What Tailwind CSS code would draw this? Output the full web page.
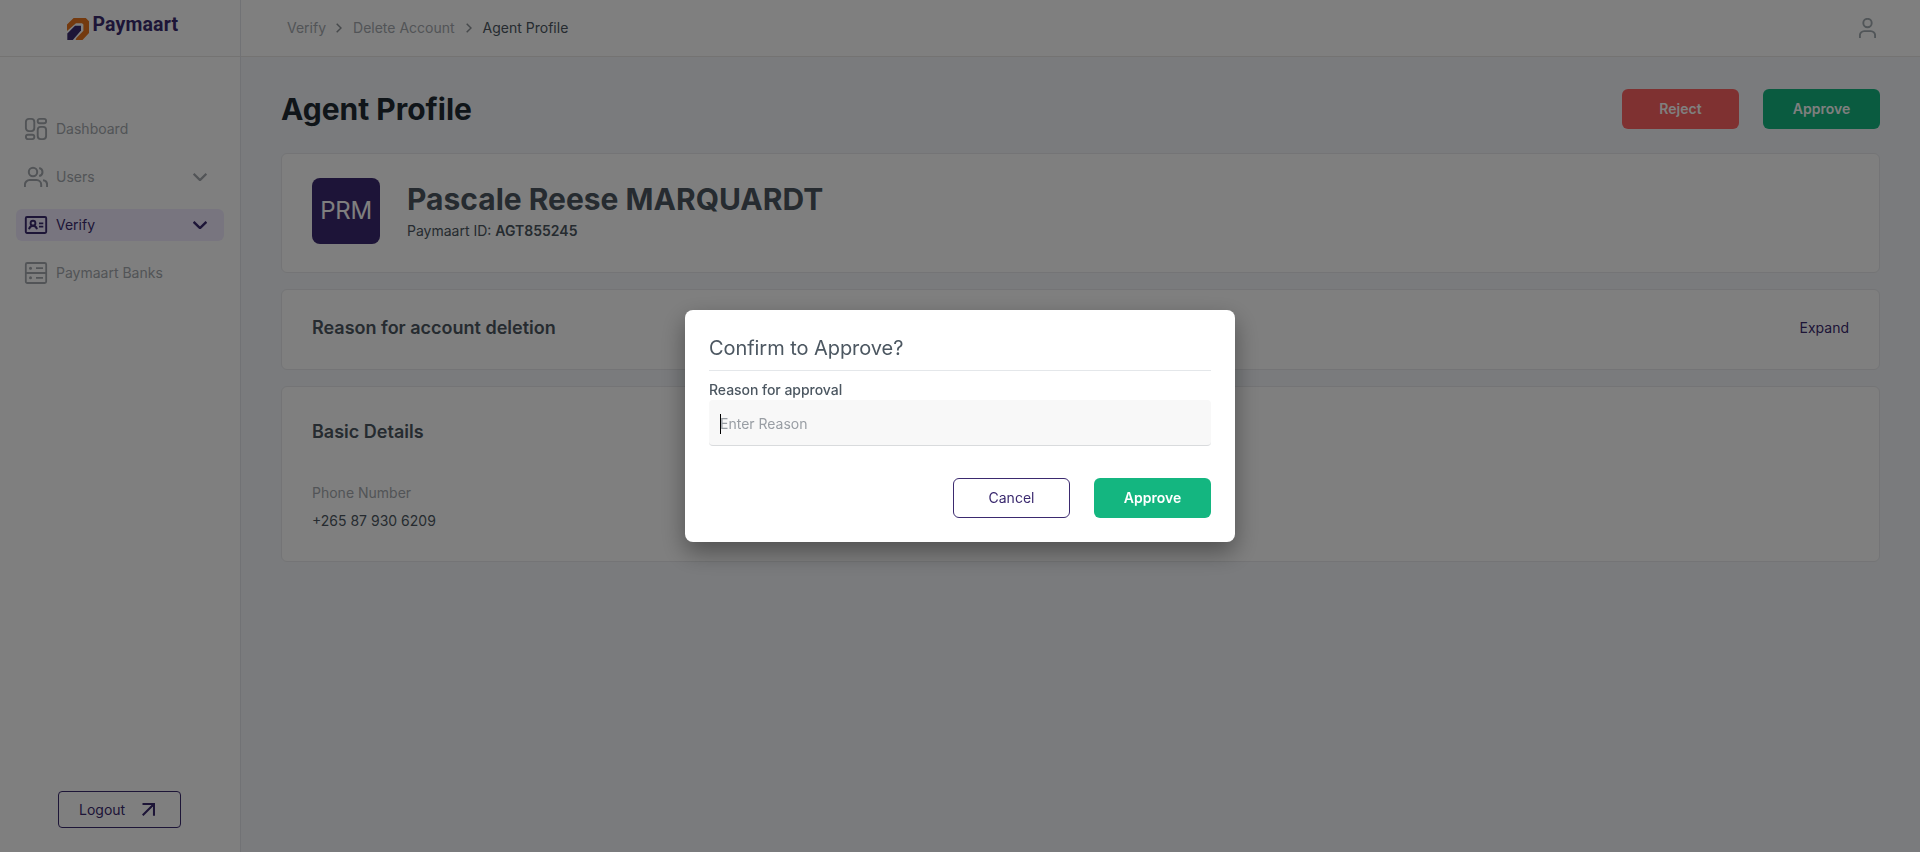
<!DOCTYPE html>
<html lang="en">
<head>
<meta charset="utf-8">
<title>Paymaart - Agent Profile</title>
<script src="https://cdn.jsdelivr.net/npm/@tailwindcss/browser@4"></script>
</head>
<body class="h-screen overflow-hidden bg-[#f4f7fb] font-['Inter',sans-serif] text-sm text-[#4c5761]">
<div class="flex h-screen">
  <!-- Sidebar -->
  <aside class="flex w-[241px] shrink-0 flex-col border-r border-[#e2e5ea] bg-white">
    <div class="flex h-[57px] shrink-0 items-start border-b border-[#e9e7e5] pt-[18px] pl-[67px]">
      <svg class="h-[22px] w-[112px] overflow-visible" viewBox="0 0 112 22">
        <path d="M0 6.6 6.6 0H18.8L22 3.2V15L15.5 22H8.6L9.4 20 16.4 12.8V6.6L15 5.2H9L0 13Z" fill="#e8751f"/>
        <path d="M.3 15.4 8 7.8H14V12.6L5.8 22H.3Z" fill="#3b2a6f"/>
        <text x="25.5" y="13" textLength="85.5" lengthAdjust="spacing" fill="#3b2a6f" class="font-['Roboto',sans-serif] text-[19.5px] font-bold">Paymaart</text>
      </svg>
    </div>
    <nav class="mt-14 flex flex-col gap-4 px-4 text-[#a4a9ae]">
      <a class="flex h-8 items-center gap-2 rounded-md pl-2">
        <svg class="size-6" viewBox="0 0 24 24" fill="none" stroke="currentColor" stroke-width="1.9"><rect x="1.9" y="1.9" width="8.4" height="12.2" rx="3"/><rect x="13.7" y="1.9" width="8.4" height="4.4" rx="2"/><rect x="13.7" y="9.9" width="8.4" height="12.2" rx="3"/><rect x="1.9" y="17.7" width="8.4" height="4.4" rx="2"/></svg>
        <span>Dashboard</span>
      </a>
      <a class="flex h-8 items-center gap-2 rounded-md pr-[17px] pl-2">
        <svg class="size-6" viewBox="0 0 24 24" fill="none" stroke="currentColor" stroke-width="2"><circle cx="9" cy="7" r="4.2"/><path d="M15.2 2.9a4.2 4.2 0 0 1 0 8.2M.9 22v-2.2a4.7 4.7 0 0 1 4.7-4.7h6.9a4.7 4.7 0 0 1 4.7 4.7V22M19 15.2a4.6 4.6 0 0 1 4.1 4.6V22"/></svg>
        <span class="grow">Users</span>
        <svg class="h-2 w-3.5" viewBox="0 0 14 8" fill="none" stroke="currentColor" stroke-width="2.3"><path d="M.6.8 7 7.1 13.4.8"/></svg>
      </a>
      <a class="flex h-8 items-center gap-2 rounded-md bg-[#f0ebff] pr-[17px] pl-2 text-[#3b2a6f]">
        <svg class="size-6" viewBox="0 0 24 24" fill="none" stroke="currentColor" stroke-width="1.9"><rect x="1.8" y="4" width="20.4" height="16" rx="1.2"/><circle cx="9" cy="10.2" r="2.4"/><path d="M5 16.2c.6-2.2 2-3.4 4-3.4s3.4 1.2 4 3.4M15 10.4h4.3M15 13.6h4.3"/></svg>
        <span class="grow">Verify</span>
        <svg class="h-2 w-3.5" viewBox="0 0 14 8" fill="none" stroke="currentColor" stroke-width="2.4"><path d="M.6.8 7 7.1 13.4.8"/></svg>
      </a>
      <a class="flex h-8 items-center gap-2 rounded-md pl-2">
        <svg class="size-6" viewBox="0 0 24 24" fill="none" stroke="currentColor" stroke-width="1.8"><rect x="1.8" y="2" width="20.4" height="20" rx="1.5"/><path d="M1.8 12h20.4M12 7.2h7M12 16.8h7"/><circle cx="6.5" cy="7.2" r="1.5" fill="currentColor" stroke="none"/><circle cx="6.5" cy="16.8" r="1.5" fill="currentColor" stroke="none"/></svg>
        <span>Paymaart Banks</span>
      </a>
    </nav>
    <button class="mt-auto mb-6 ml-[58px] flex h-[37px] w-[123px] items-center rounded border border-[#3b2a6f] pl-5 text-[#3b2a6f]">
      <span>Logout</span>
      <svg class="ml-[17px] size-[13px]" viewBox="0 0 13 13" fill="none" stroke="currentColor" stroke-width="2.1"><path d="M.5 1H12V12.8M12 1 .7 12.3"/></svg>
    </button>
  </aside>

  <div class="flex grow flex-col">
    <!-- Top bar -->
    <header class="flex h-[57px] shrink-0 items-center justify-between border-b border-[#e9e7e5] bg-white pr-11 pl-[46px]">
      <div class="flex items-center text-[#a4a9ae]">
        <span>Verify</span>
        <svg class="mr-[11px] ml-2.5 h-2.5 w-1.5" viewBox="0 0 6 10" fill="none" stroke="#8f9499" stroke-width="1.5"><path d="M.7.7 5 5 .7 9.3"/></svg>
        <span>Delete Account</span>
        <svg class="mr-[11px] ml-[11px] h-2.5 w-1.5" viewBox="0 0 6 10" fill="none" stroke="#8f9499" stroke-width="1.5"><path d="M.7.7 5 5 .7 9.3"/></svg>
        <span class="text-[#4c5761]">Agent Profile</span>
      </div>
      <svg class="h-5 w-[17px]" viewBox="0 0 17 20" fill="none" stroke="#a2abb1" stroke-width="1.9"><circle cx="8.5" cy="5" r="4.2"/><path d="M.9 20v-2.6a4.3 4.3 0 0 1 4.3-4.3h6.6a4.3 4.3 0 0 1 4.3 4.3V20"/></svg>
    </header>

    <main class="pt-8 pr-10 pl-10">
      <div class="flex h-10 items-center justify-between">
        <h1 class="text-3xl font-bold text-[#212b33]">Agent Profile</h1>
        <div class="flex gap-6 font-semibold text-white">
          <button class="h-10 w-[117px] rounded-md bg-[#ff6262]">Reject</button>
          <button class="h-10 w-[117px] rounded-md bg-[#14b680]">Approve</button>
        </div>
      </div>

      <section class="mt-6 flex h-[120px] rounded-md border border-[#e8e9ec] bg-white pt-6 pl-[30px]">
        <div class="flex h-[66px] w-[68px] items-center justify-center rounded-lg bg-[#3b2870] text-2xl tracking-[-0.3px] text-white">PRM</div>
        <div class="pt-[3px] pl-[27px]">
          <h2 class="text-3xl leading-9 font-bold">Pascale Reese MARQUARDT</h2>
          <p class="mt-1 leading-5">Paymaart ID: <span class="font-semibold">AGT855245</span></p>
        </div>
      </section>

      <section class="mt-4 flex h-[81px] items-start justify-between rounded-md border border-[#e8e9ec] bg-white px-[30px] pt-[26px]">
        <h3 class="text-lg leading-[23px] font-semibold">Reason for account deletion</h3>
        <button class="leading-[24px] text-[#3b2a6f]">Expand</button>
      </section>

      <section class="mt-4 h-44 rounded-md border border-[#e8e9ec] bg-white px-[30px] pt-[33px]">
        <h3 class="text-lg leading-[23px] font-semibold">Basic Details</h3>
        <p class="mt-10 leading-5 text-[#a4a9ae]">Phone Number</p>
        <p class="mt-2 leading-5">+265 87 930 6209</p>
      </section>
    </main>
  </div>
</div>

<!-- Approval dialog -->
<div class="fixed inset-0 flex items-center justify-center bg-black/50">
  <div class="h-[232px] w-[550px] rounded-lg bg-white p-6 shadow-[0_10px_24px_rgba(0,0,0,0.38)]">
    <h2 class="h-[37px] border-b border-[#e4e7ea] text-xl leading-7 tracking-[-0.06px]">Confirm to Approve?</h2>
    <label class="mt-[9px] block leading-5 font-medium tracking-[-0.04px]">Reason for approval</label>
    <div class="flex h-[46px] items-center rounded border-b border-[#d9dbdd] bg-[#f8f8f8] pt-[3px] pl-[11px]">
      <span class="h-5 w-px bg-black"></span>
      <span class="-ml-px text-[#999ea4]">Enter Reason</span>
    </div>
    <div class="mt-8 flex justify-end gap-6">
      <button class="h-10 w-[117px] rounded-md border border-[#3b2a6f] text-[#3b2a6f]">Cancel</button>
      <button class="h-10 w-[117px] rounded-md bg-[#14b680] font-semibold text-white">Approve</button>
    </div>
  </div>
</div>
</body>
</html>
